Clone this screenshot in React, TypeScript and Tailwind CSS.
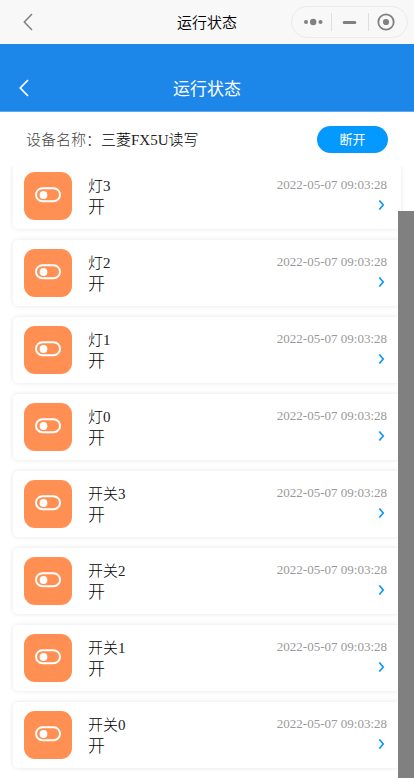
interface Device {
    label: string
    index: number
    status: string
    time: string
}

const devices: Device[] = [
    { label: '灯', index: 3, status: '开', time: '2022-05-07 09:03:28' },
    { label: '灯', index: 2, status: '开', time: '2022-05-07 09:03:28' },
    { label: '灯', index: 1, status: '开', time: '2022-05-07 09:03:28' },
    { label: '灯', index: 0, status: '开', time: '2022-05-07 09:03:28' },
    { label: '开关', index: 3, status: '开', time: '2022-05-07 09:03:28' },
    { label: '开关', index: 2, status: '开', time: '2022-05-07 09:03:28' },
    { label: '开关', index: 1, status: '开', time: '2022-05-07 09:03:28' },
    { label: '开关', index: 0, status: '开', time: '2022-05-07 09:03:28' },
]

function BackIcon({ className }: { className: string }) {
    return (
        <svg width="10" height="18" viewBox="0 0 10 18" fill="none" stroke="currentColor" className={className}>
            <path d="M9 1L1.3 9L9 17" />
        </svg>
    )
}

function SwitchIcon() {
    return (
        <svg width="26" height="16" viewBox="0 0 26 16" fill="none">
            <rect x="1" y="1.2" width="24" height="13" rx="6.5" stroke="#fff" strokeWidth="2" />
            <circle cx="8.5" cy="8" r="3.9" fill="#fff" />
        </svg>
    )
}

function TitleBar() {
    return (
        <div className="flex h-11 shrink-0 items-center bg-[#f8f8f8] font-['Noto_Sans_CJK_SC',sans-serif]">
            <div className="flex w-[120px] pl-[22.5px]">
                <BackIcon className="text-[#7f7f7f] stroke-[1.5]" />
            </div>
            <div className="flex-1 pb-px text-center text-[15px] leading-5 font-[350] text-black">运行状态</div>
            <div className="flex w-[120px] justify-end pr-[6px]">
                <div className="flex h-8 w-[117px] shrink-0 items-center rounded-full border border-[#ebebeb]">
                    <svg width="115" height="30" viewBox="0 0 115 30" fill="none">
                        <g fill="#808080">
                            <circle cx="14" cy="15" r="2" />
                            <circle cx="21.2" cy="15" r="3.2" />
                            <circle cx="28.5" cy="15" r="2" />
                            <circle cx="94" cy="15" r="3.1" />
                        </g>
                        <path d="M39.5 6v18M76.5 6v18" stroke="#dfdfdf" />
                        <path d="M52.2 15.5h10.6" stroke="#808080" strokeWidth="3" strokeLinecap="round" />
                        <circle cx="94" cy="15" r="7.7" stroke="#808080" strokeWidth="1.8" />
                    </svg>
                </div>
            </div>
        </div>
    )
}

function DeviceCard({ device }: { device: Device }) {
    return (
        <div className="flex h-[66px] shrink-0 rounded-[5px] bg-white px-[11px] pt-[9px] shadow-[0_0_5px_rgba(0,0,0,0.1)]">
            <div className="flex h-12 w-12 shrink-0 justify-center rounded-[11px] bg-[#ff8f52] pt-[15px]">
                <SwitchIcon />
            </div>
            <div className="ml-4 flex-1">
                <div className="mt-1 flex h-[21px] items-baseline text-[15px] leading-[21px] text-[#222]">
                    <span className="font-light text-black">{device.label}</span>
                    <span>{device.index}</span>
                </div>
                <div className="mt-px text-[17px] leading-5 font-light text-black">{device.status}</div>
            </div>
            <div className="mr-[3px] flex flex-col items-end">
                <div className="mt-1 text-[13px] leading-[17px] text-[#999]">{device.time}</div>
                <svg width="7" height="10" viewBox="0 0 7 10" fill="none" className="mt-[7px] mr-[2px]">
                    <path d="M1.3 0.5L5.2 5L1.3 9.5" stroke="#1296f5" strokeWidth="1.7" />
                </svg>
            </div>
        </div>
    )
}

export default function App() {
    return (
        <div className="relative flex h-[778px] w-[414px] flex-col overflow-hidden bg-white font-['Liberation_Serif','Noto_Sans_CJK_SC',serif]">
            <TitleBar />

            <div className="flex h-[68px] shrink-0 items-end border-b border-[#5ca7ef] bg-[#1c86e9] pb-3 text-white">
                <div className="flex h-[22px] w-[60px] items-center pl-[19px]">
                    <BackIcon className="stroke-[1.8]" />
                </div>
                <div className="flex-1 text-center font-['Noto_Sans_CJK_SC',sans-serif] text-[17px] leading-[22px]">运行状态</div>
                <div className="w-[60px]" />
            </div>

            <div className="flex h-[54px] shrink-0 items-center pr-[26px] pl-[26px] text-[15px]">
                <div className="flex items-baseline leading-[22px] text-[#222]">
                    <span className="font-['Noto_Sans_CJK_SC',sans-serif] font-light text-[#444]">设备名称：</span>
                    <span className="font-['Noto_Sans_CJK_SC',sans-serif] font-light text-black">三菱</span>
                    <span>FX5U</span>
                    <span className="font-['Noto_Sans_CJK_SC',sans-serif] font-light text-black">读写</span>
                </div>
                <button className="ml-auto h-[27px] w-[71px] rounded-full bg-[#0499ff] text-[13px] leading-[27px] text-white">断开</button>
            </div>

            {/* list is scrolled slightly, the first card sits under the header */}
            <div className="flex-1 overflow-hidden px-[13px]">
                <div className="-mt-[3px] flex flex-col gap-[11px]">
                    {devices.map((device) => (
                        <DeviceCard key={`${device.label}${device.index}`} device={device} />
                    ))}
                </div>
            </div>

            {/* scrollbar thumb */}
            <div className="absolute top-[211px] right-0 bottom-0 w-4 bg-[#808080]" />
        </div>
    )
}
